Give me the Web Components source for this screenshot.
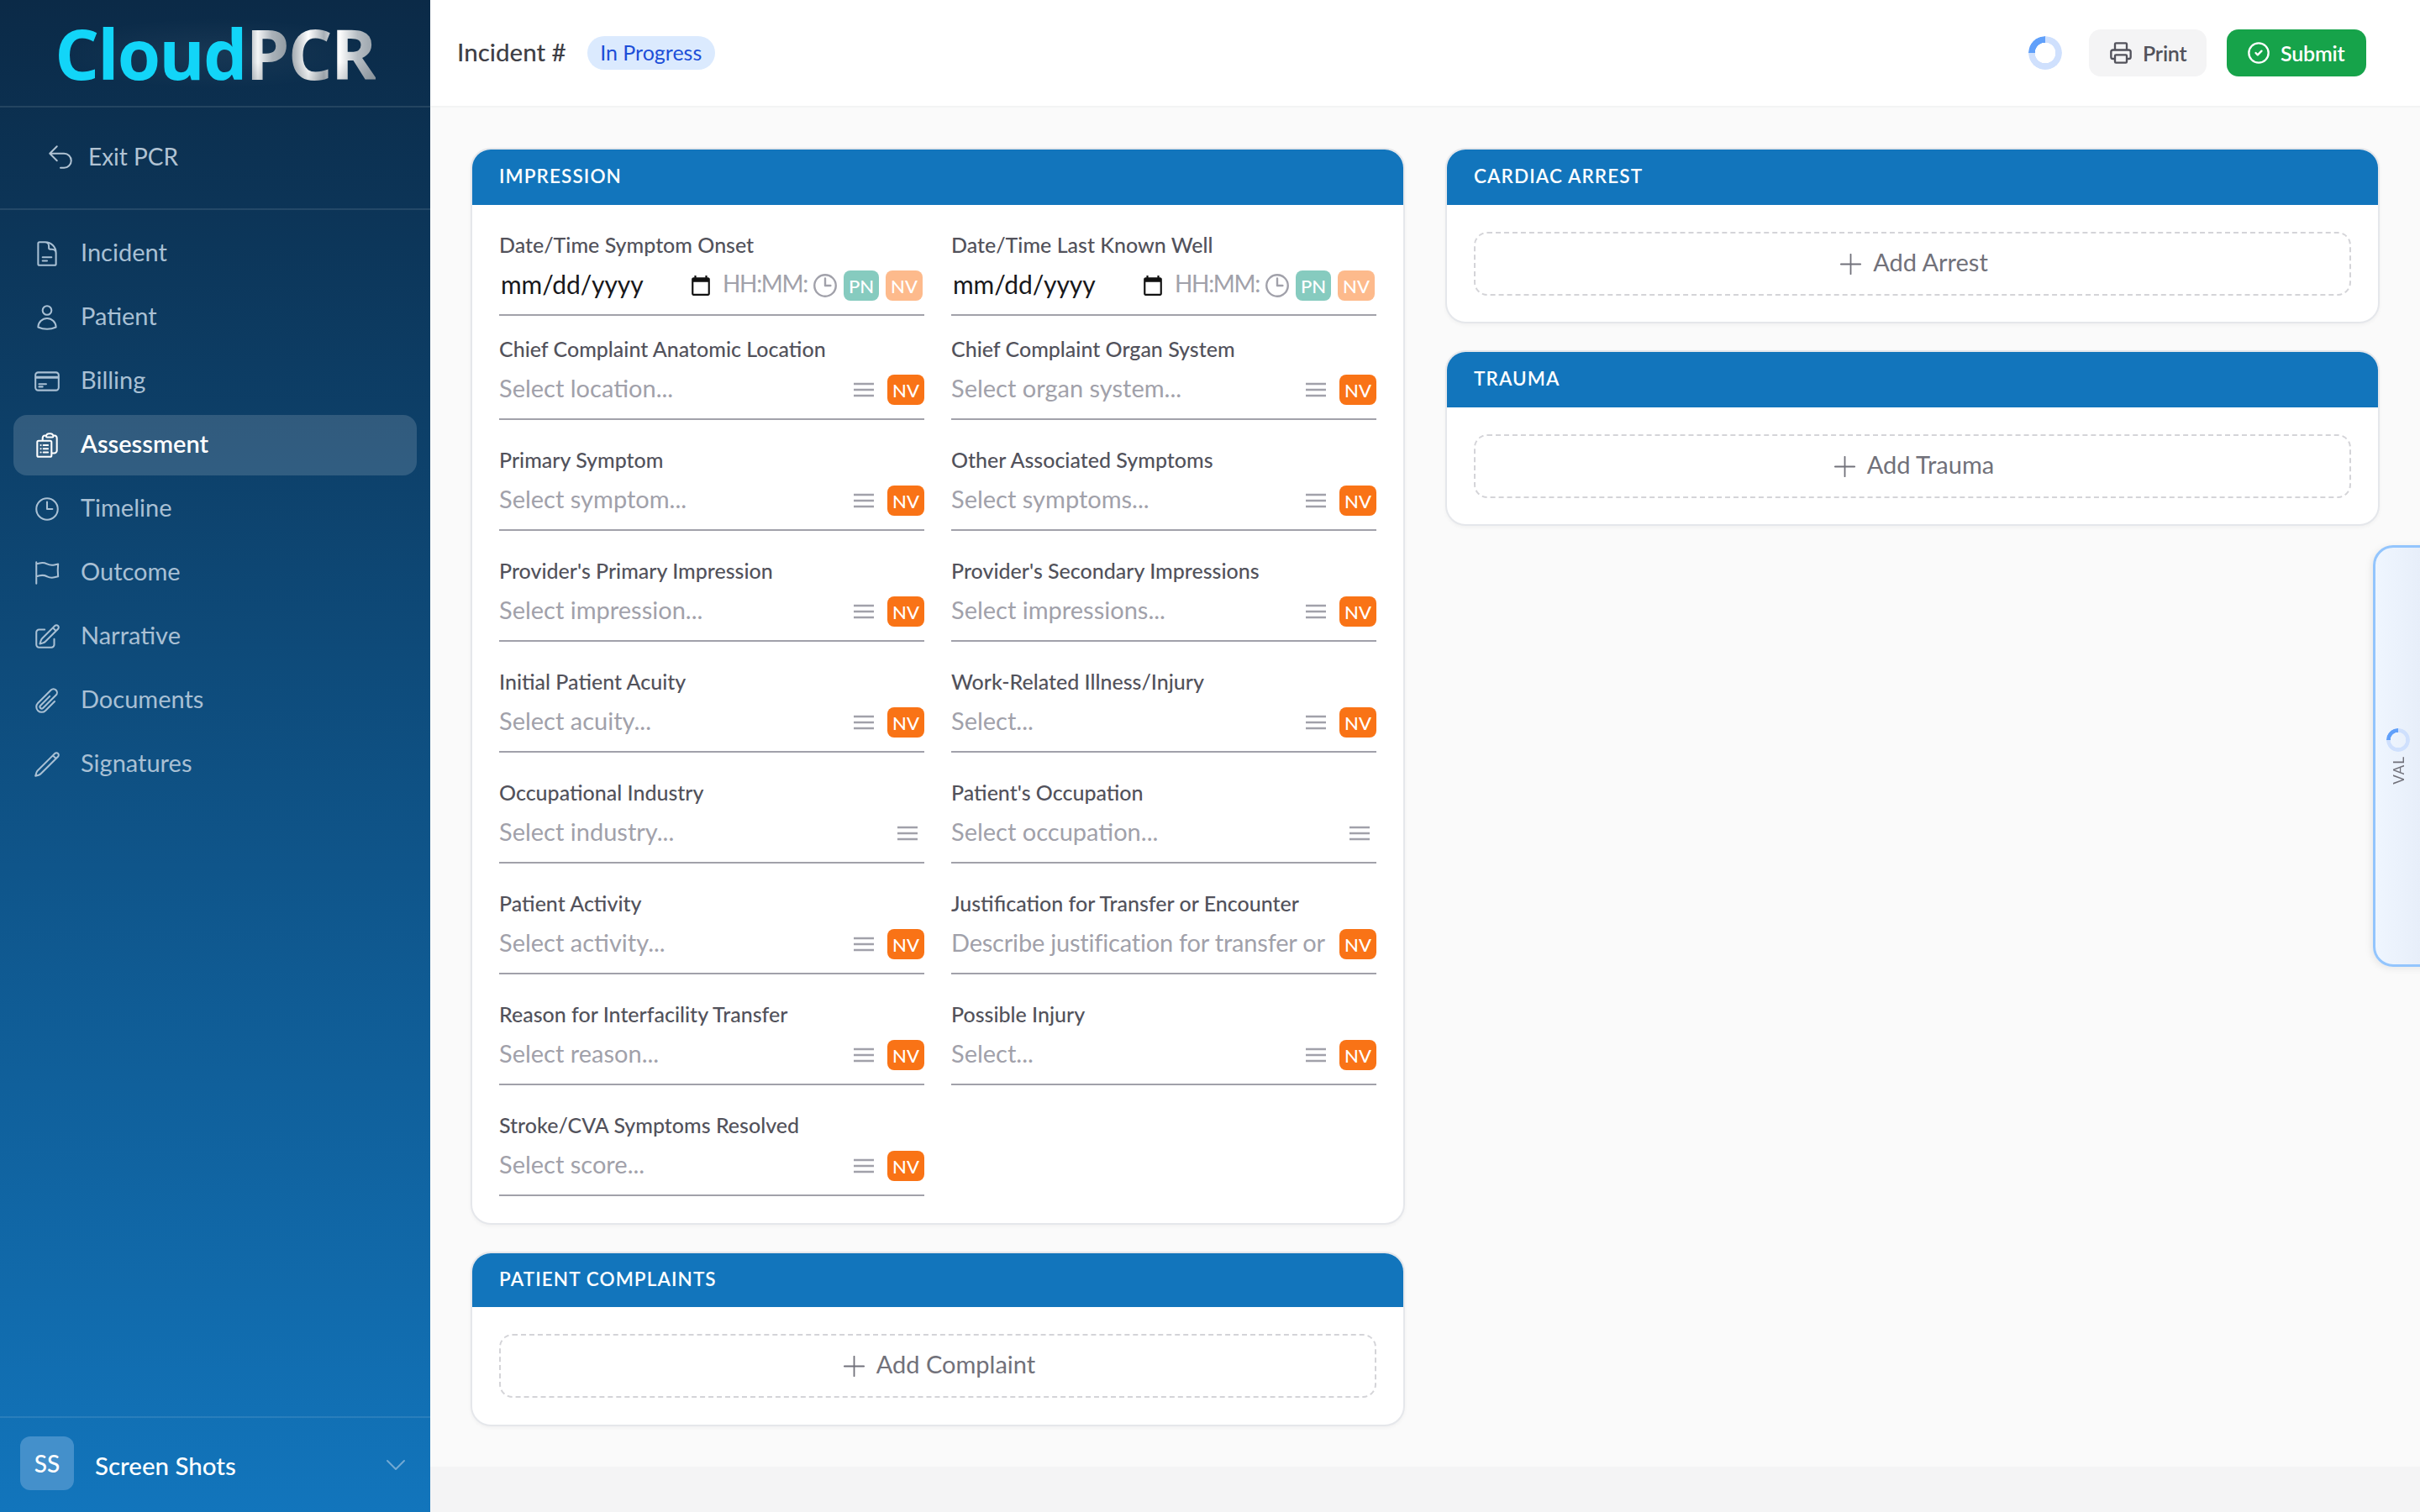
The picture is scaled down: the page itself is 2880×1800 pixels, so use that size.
<!DOCTYPE html>
<html lang="en">
<head>
<meta charset="utf-8">
<title>CloudPCR</title>
<style>
html,body{margin:0;padding:0;height:100%;background:#f4f4f5;font-family:"Lato","Liberation Sans",sans-serif;}
body{display:block;}
</style>
</head>
<body>
<cp-app>
  <cp-sidebar slot="sidebar">
    <cp-nav-item icon="doc">Incident</cp-nav-item>
    <cp-nav-item icon="user">Patient</cp-nav-item>
    <cp-nav-item icon="card">Billing</cp-nav-item>
    <cp-nav-item icon="clip" active>Assessment</cp-nav-item>
    <cp-nav-item icon="clock">Timeline</cp-nav-item>
    <cp-nav-item icon="flag">Outcome</cp-nav-item>
    <cp-nav-item icon="edit">Narrative</cp-nav-item>
    <cp-nav-item icon="paperclip">Documents</cp-nav-item>
    <cp-nav-item icon="pencil">Signatures</cp-nav-item>
  </cp-sidebar>
  <cp-topbar slot="topbar"></cp-topbar>
  <cp-column>
    <cp-card title="Impression" h="66" pad="30px 32px 32px">
      <cp-form-grid>
        <cp-field label="Date/Time Symptom Onset" kind="date" tight></cp-field>
        <cp-field label="Date/Time Last Known Well" kind="date" tight></cp-field>
        <cp-field label="Chief Complaint Anatomic Location" placeholder="Select location..." nv></cp-field>
        <cp-field label="Chief Complaint Organ System" placeholder="Select organ system..." nv></cp-field>
        <cp-field label="Primary Symptom" placeholder="Select symptom..." nv></cp-field>
        <cp-field label="Other Associated Symptoms" placeholder="Select symptoms..." nv></cp-field>
        <cp-field label="Provider's Primary Impression" placeholder="Select impression..." nv></cp-field>
        <cp-field label="Provider's Secondary Impressions" placeholder="Select impressions..." nv></cp-field>
        <cp-field label="Initial Patient Acuity" placeholder="Select acuity..." nv></cp-field>
        <cp-field label="Work-Related Illness/Injury" placeholder="Select..." nv></cp-field>
        <cp-field label="Occupational Industry" placeholder="Select industry..."></cp-field>
        <cp-field label="Patient's Occupation" placeholder="Select occupation..."></cp-field>
        <cp-field label="Patient Activity" placeholder="Select activity..." nv></cp-field>
        <cp-field label="Justification for Transfer or Encounter" placeholder="Describe justification for transfer or" kind="text" nv></cp-field>
        <cp-field label="Reason for Interfacility Transfer" placeholder="Select reason..." nv></cp-field>
        <cp-field label="Possible Injury" placeholder="Select..." nv></cp-field>
        <cp-field label="Stroke/CVA Symptoms Resolved" placeholder="Select score..." nv last></cp-field>
      </cp-form-grid>
    </cp-card>
    <cp-card title="Patient Complaints" h="64" pad="32px"><cp-add-button>Add Complaint</cp-add-button></cp-card>
  </cp-column>
  <cp-column>
    <cp-card title="Cardiac Arrest" h="66" pad="32px 32px 31px"><cp-add-button>Add Arrest</cp-add-button></cp-card>
    <cp-card title="Trauma" h="66" pad="32px 32px 31px"><cp-add-button>Add Trauma</cp-add-button></cp-card>
  </cp-column>
  <cp-val-tab slot="overlay"></cp-val-tab>
</cp-app>

<script>
const ICONS = {
  exit:'M9 15 3 9m0 0 6-6M3 9h12a6 6 0 0 1 0 12h-3',
  doc:'M19.5 14.25v-2.625a3.375 3.375 0 0 0-3.375-3.375h-1.5A1.125 1.125 0 0 1 13.5 7.125v-1.5a3.375 3.375 0 0 0-3.375-3.375H8.25m0 12.75h7.5m-7.5 3H12M10.5 2.25H5.625c-.621 0-1.125.504-1.125 1.125v17.25c0 .621.504 1.125 1.125 1.125h12.75c.621 0 1.125-.504 1.125-1.125V11.25a9 9 0 0 0-9-9Z',
  user:'M15.75 6a3.75 3.75 0 1 1-7.5 0 3.75 3.75 0 0 1 7.5 0ZM4.501 20.118a7.5 7.5 0 0 1 14.998 0A17.933 17.933 0 0 1 12 21.75c-2.676 0-5.216-.584-7.499-1.632Z',
  card:'M2.25 8.25h19.5M2.25 9h19.5m-16.5 5.25h6m-6 2.25h3m-3.75 3h15a2.25 2.25 0 0 0 2.25-2.25V6.75A2.25 2.25 0 0 0 19.5 4.5h-15a2.25 2.25 0 0 0-2.25 2.25v10.5A2.25 2.25 0 0 0 4.5 19.5Z',
  clip:'M9 12h3.75M9 15h3.75M9 18h3.75m3 .75H18a2.25 2.25 0 0 0 2.25-2.25V6.108c0-1.135-.845-2.098-1.976-2.192a48.424 48.424 0 0 0-1.123-.08m-5.801 0c-.065.21-.1.433-.1.664 0 .414.336.75.75.75h4.5a.75.75 0 0 0 .75-.75 2.25 2.25 0 0 0-.1-.664m-5.8 0A2.251 2.251 0 0 1 13.5 2.25H15c1.012 0 1.867.668 2.15 1.586m-5.8 0c-.376.023-.75.05-1.124.08C9.095 4.01 8.25 4.973 8.25 6.108V8.25m0 0H4.875c-.621 0-1.125.504-1.125 1.125v11.25c0 .621.504 1.125 1.125 1.125h9.75c.621 0 1.125-.504 1.125-1.125V9.375c0-.621-.504-1.125-1.125-1.125H8.25ZM6.75 12h.008v.008H6.75V12Zm0 3h.008v.008H6.75V15Zm0 3h.008v.008H6.75V18Z',
  clock:'M12 6v6h4.5m4.5 0a9 9 0 1 1-18 0 9 9 0 0 1 18 0Z',
  flag:'M3 3v1.5M3 21v-6m0 0 2.77-.693a9 9 0 0 1 6.208.682l.108.054a9 9 0 0 0 6.086.71l3.114-.732a48.524 48.524 0 0 1-.005-10.499l-3.11.732a9 9 0 0 1-6.085-.711l-.108-.054a9 9 0 0 0-6.208-.682L3 4.5M3 15V4.5',
  edit:'m16.862 4.487 1.687-1.688a1.875 1.875 0 1 1 2.652 2.652L10.582 16.07a4.5 4.5 0 0 1-1.897 1.13L6 18l.8-2.685a4.5 4.5 0 0 1 1.13-1.897l8.932-8.931Zm0 0L19.5 7.125M18 14v4.75A2.25 2.25 0 0 1 15.75 21H5.25A2.25 2.25 0 0 1 3 18.75V8.25A2.25 2.25 0 0 1 5.25 6H10',
  paperclip:'m18.375 12.739-7.693 7.693a4.5 4.5 0 0 1-6.364-6.364l10.94-10.94A3 3 0 1 1 19.5 7.372L8.552 18.32m.009-.01-.01.01m5.699-9.941-7.81 7.81a1.5 1.5 0 0 0 2.112 2.13',
  pencil:'m16.862 4.487 1.687-1.688a1.875 1.875 0 1 1 2.652 2.652L6.832 19.82a4.5 4.5 0 0 1-1.897 1.13l-2.685.8.8-2.685a4.5 4.5 0 0 1 1.13-1.897L16.863 4.487Zm0 0L19.5 7.125',
  chevron:'m19.5 8.25-7.5 7.5-7.5-7.5',
  printer:'M6 18H4a2 2 0 0 1-2-2v-5a2 2 0 0 1 2-2h16a2 2 0 0 1 2 2v5a2 2 0 0 1-2 2h-2M6 9V3a1 1 0 0 1 1-1h10a1 1 0 0 1 1 1v6M7 14h10a1 1 0 0 1 1 1v6a1 1 0 0 1-1 1H7a1 1 0 0 1-1-1v-6a1 1 0 0 1 1-1Z',
  check:'M22 12a10 10 0 1 1-20 0 10 10 0 0 1 20 0ZM9 12l2 2 4-4',
  plus:'M12 4.5v15m7.5-7.5h-15'
};

class CpIcon extends HTMLElement {
  connectedCallback(){
    const s = this.getAttribute('size')||34, w = this.getAttribute('sw')||1.5, n = this.getAttribute('name');
    const vb = this.getAttribute('vb')||'0 0 24 24';
    this.attachShadow({mode:'open'}).innerHTML =
      `<style>:host{display:inline-flex;flex:none;line-height:0}</style>
       <svg xmlns="http://www.w3.org/2000/svg" width="${s}" height="${s}" viewBox="${vb}" fill="none" stroke="currentColor" stroke-width="${w}" stroke-linecap="round" stroke-linejoin="round"><path d="${ICONS[n]}"/></svg>`;
  }
}
customElements.define('cp-icon', CpIcon);

class CpSpinner extends HTMLElement {
  connectedCallback(){
    const s = +(this.getAttribute('size')||40), t = +(this.getAttribute('thick')||8);
    this.attachShadow({mode:'open'}).innerHTML =
      `<style>:host{display:inline-block;flex:none;line-height:0}
       .r{width:${s}px;height:${s}px;border-radius:50%;box-sizing:border-box;background:conic-gradient(#cfe0fd 0 270deg,#60a0fa 270deg 360deg);
       -webkit-mask:radial-gradient(farthest-side,transparent calc(100% - ${t}px),#000 calc(100% - ${t}px + .5px));mask:radial-gradient(farthest-side,transparent calc(100% - ${t}px),#000 calc(100% - ${t}px + .5px));}</style>
       <div class="r"></div>`;
  }
}
customElements.define('cp-spinner', CpSpinner);

class CpApp extends HTMLElement {
  connectedCallback(){
    this.attachShadow({mode:'open'}).innerHTML = `<style>
      :host{display:grid;grid-template-columns:512px 1fr;height:1800px;width:2880px;position:relative;overflow:hidden;font-family:"Lato","Liberation Sans",sans-serif;}
      .main{display:flex;flex-direction:column;min-width:0;background:#f4f4f5;}
      .content{display:grid;grid-template-columns:1fr 1fr;gap:48px;padding:48px;background:#fafafa;align-items:start;}
    </style>
    <slot name="sidebar"></slot>
    <div class="main"><slot name="topbar"></slot><div class="content"><slot></slot></div></div>
    <slot name="overlay"></slot>`;
  }
}
customElements.define('cp-app', CpApp);

class CpSidebar extends HTMLElement {
  connectedCallback(){
    this.attachShadow({mode:'open'}).innerHTML = `<style>
      :host{display:flex;flex-direction:column;height:1800px;background:linear-gradient(180deg,#0b2a47 0%,#1275bc 100%);color:#fff;}
      .logo{height:126px;border-bottom:2px solid rgba(255,255,255,.1);display:flex;align-items:center;justify-content:center;flex:none;box-sizing:content-box;}
      .logotext{font-family:"Open Sans","Liberation Sans",sans-serif;font-weight:700;font-size:83px;line-height:1;letter-spacing:-1.9px;white-space:nowrap;
        background:radial-gradient(ellipse at center,rgba(255,255,255,.05),rgba(255,255,255,0) 70%);padding:0 4px 2px;}
      .cloud{color:#12d5f8;}
      .pcr{background:linear-gradient(180deg,#fff0,#0000 60%,rgba(60,70,80,.35)),linear-gradient(90deg,#9aa3ab 0%,#f4f6f7 9%,#aab2b9 20%,#8f98a0 33%,#fff 48%,#a7afb6 60%,#fff 72%,#b5bcc2 86%,#98a1a9 100%);-webkit-background-clip:text;background-clip:text;color:transparent;}
      .exit{height:120px;flex:none;box-sizing:content-box;border-bottom:2px solid rgba(255,255,255,.1);display:flex;align-items:center;gap:16px;padding-left:55px;color:#b1c3d3;font-size:28px;}
      .exit span{position:relative;top:-2px}
      .exit cp-icon{position:relative;top:-1px}
      nav{flex:1;display:flex;flex-direction:column;gap:4px;padding:16px;}
      .foot{flex:none;height:112px;border-top:2px solid rgba(255,255,255,.1);display:flex;align-items:center;padding:0 24px;gap:25px;}
      .av{width:64px;height:64px;border-radius:12px;background:#4490cb;display:flex;align-items:center;justify-content:center;font-size:28px;font-weight:500;margin-top:-4px;}
      .name{flex:1;font-size:29.5px;font-weight:500;}
      .chev{color:#72a9d3;margin-right:1px;}
    </style>
    <div class="logo"><div class="logotext"><span class="cloud">Cloud</span><span class="pcr">PCR</span></div></div>
    <div class="exit"><cp-icon name="exit" size="34" sw="1.4"></cp-icon><span>Exit PCR</span></div>
    <nav><slot></slot></nav>
    <div class="foot"><div class="av">SS</div><div class="name">Screen Shots</div><cp-icon class="chev" name="chevron" size="32" sw="1.5"></cp-icon></div>`;
  }
}
customElements.define('cp-sidebar', CpSidebar);

class CpNavItem extends HTMLElement {
  connectedCallback(){
    const active = this.hasAttribute('active');
    this.attachShadow({mode:'open'}).innerHTML = `<style>
      :host{display:flex;align-items:center;height:72px;border-radius:16px;padding-left:23px;gap:23px;font-size:29px;color:${active?'#fff':'#a9c0d4'};background:${active?'rgba(255,255,255,.15)':'transparent'};font-weight:${active?600:400};}
      span{position:relative;top:-3px}
    </style>
    <cp-icon name="${this.getAttribute('icon')}" size="34" sw="1.45"></cp-icon><span><slot></slot></span>`;
  }
}
customElements.define('cp-nav-item', CpNavItem);

class CpTopbar extends HTMLElement {
  connectedCallback(){
    this.attachShadow({mode:'open'}).innerHTML = `<style>
      :host{display:flex;align-items:center;height:126px;box-sizing:content-box;background:#fff;border-bottom:2px solid #f3f4f4;padding:0 64px 0 32px;}
      .title{font-size:29.5px;font-weight:500;color:#3f3f46;margin-bottom:3px;}
      .badge{margin-left:25px;height:40px;width:152px;justify-content:center;border-radius:20px;background:#dbeafe;color:#1d4ed8;font-size:25px;display:flex;align-items:center;padding-bottom:2px;box-sizing:border-box;margin-top:-1px;}
      .sp{flex:1}
      .btn{height:56px;box-sizing:border-box;border-radius:14px;display:flex;align-items:center;gap:12px;font-size:25px;font-weight:600;padding:0 0 0 24px;letter-spacing:-.2px;}
      .print{background:#f4f4f5;color:#52525b;margin-left:32px;width:140px;}
      .submit{background:#16a34a;color:#fff;margin-left:24px;width:166px;}
    </style>
    <span class="title">Incident #</span><span class="badge">In Progress</span><span class="sp"></span>
    <cp-spinner size="40" thick="8"></cp-spinner>
    <div class="btn print"><cp-icon name="printer" size="28" sw="2"></cp-icon><span>Print</span></div>
    <div class="btn submit"><cp-icon name="check" size="28" sw="2"></cp-icon><span>Submit</span></div>`;
  }
}
customElements.define('cp-topbar', CpTopbar);

class CpColumn extends HTMLElement {
  connectedCallback(){
    this.attachShadow({mode:'open'}).innerHTML = `<style>:host{display:flex;flex-direction:column;gap:32px;min-width:0;}</style><slot></slot>`;
  }
}
customElements.define('cp-column', CpColumn);

class CpCard extends HTMLElement {
  connectedCallback(){
    const pad = this.getAttribute('pad')||'32px';
    const h = this.getAttribute('h')||66;
    this.attachShadow({mode:'open'}).innerHTML = `<style>
      :host{display:block;background:#fff;border:2px solid #e5e7eb;border-radius:24px;box-shadow:0 2px 4px rgba(0,0,0,.04);overflow:hidden;}
      .h{height:${h}px;box-sizing:border-box;background:#1275bc;color:#fff;display:flex;align-items:center;padding:0 32px 4px;font-size:22.5px;font-weight:600;letter-spacing:1.1px;text-transform:uppercase;}
      .b{padding:${pad};}
    </style>
    <div class="h">${this.getAttribute('title')}</div><div class="b"><slot></slot></div>`;
  }
}
customElements.define('cp-card', CpCard);

class CpFormGrid extends HTMLElement {
  connectedCallback(){
    this.attachShadow({mode:'open'}).innerHTML = `<style>:host{display:grid;grid-template-columns:1fr 1fr;column-gap:32px;}</style><slot></slot>`;
  }
}
customElements.define('cp-form-grid', CpFormGrid);

class CpBadge extends HTMLElement {
  connectedCallback(){
    this.attachShadow({mode:'open'}).innerHTML = `<style>
      :host{display:inline-flex;align-items:center;justify-content:center;flex:none;height:36px;width:${this.getAttribute('w')||44}px;border-radius:8px;background:${this.getAttribute('bg')||'#f97316'};color:#fff;font-size:22px;font-weight:500;}
    </style><slot></slot>`;
  }
}
customElements.define('cp-badge', CpBadge);

class CpField extends HTMLElement {
  connectedCallback(){
    const kind = this.getAttribute('kind')||'select', nv = this.hasAttribute('nv');
    const tight = this.hasAttribute('tight'), last = this.hasAttribute('last');
    const ph = this.getAttribute('placeholder')||'';
    let ctl = '';
    if(kind==='date'){
      ctl = `<span class="date">mm/dd/yyyy</span>
        <svg class="cal" width="26" height="26" viewBox="0 0 24 24" fill="#111"><path d="M20 3h-1V1h-2v2H7V1H5v2H4c-1.1 0-2 .9-2 2v16c0 1.1.9 2 2 2h16c1.1 0 2-.9 2-2V5c0-1.1-.9-2-2-2zm0 18H4V8h16v13z"/></svg>
        <span class="time">HH:MM:</span>
        <cp-icon class="tclock" name="clock" size="34" sw="1.7"></cp-icon>
        <cp-badge bg="#86cbbf" w="42" class="pn">PN</cp-badge><cp-badge bg="#fdba8c" class="nv2">NV</cp-badge>`;
    } else if(kind==='text'){
      ctl = `<span class="ph" style="letter-spacing:-.2px">${ph}</span><cp-badge>NV</cp-badge>`;
    } else {
      ctl = `<span class="ph">${ph}</span>
        <svg class="menu${nv?'':' solo'}" width="24" height="18" viewBox="0 0 24 18" stroke="#a1a1aa" stroke-width="2.5" fill="none"><path d="M0 2h24M0 9h24M0 16h24"/></svg>
        ${nv?'<cp-badge>NV</cp-badge>':''}`;
    }
    this.attachShadow({mode:'open'}).innerHTML = `<style>
      :host{display:block;margin-bottom:${last?0:tight?22:30}px;min-width:0;}
      label{display:block;height:36px;line-height:34px;font-size:25px;color:#52525b;font-weight:500;white-space:nowrap;}
      .c{height:66px;box-sizing:border-box;border-bottom:2px solid #a1a1aa;display:flex;align-items:center;padding-bottom:4px;gap:16px;overflow:hidden;}
      .ph{flex:1;min-width:0;font-size:29px;color:#a1a1aa;white-space:nowrap;margin-bottom:5px;}
      .menu.solo{margin-right:8px;}
      .date{font-size:30px;color:#18181b;margin-left:2px;margin-bottom:4px;width:227px;flex:none;letter-spacing:-.1px;}
      .cal{margin-left:-2px;margin-right:-2px;flex:none;}
      .c.d{gap:0;}
      .time{width:100px;flex:none;font-size:28px;color:#a1a1aa;margin-left:15px;margin-bottom:6px;letter-spacing:-1.3px;white-space:nowrap;}
      .tclock{color:#a1a1aa;margin-left:5px;}
      .pn{margin-left:5px;} .nv2{margin-left:8px;}
    </style>
    <label>${this.getAttribute('label')}</label><div class="c${kind==='date'?' d':''}">${ctl}</div>`;
  }
}
customElements.define('cp-field', CpField);

class CpAddButton extends HTMLElement {
  connectedCallback(){
    this.attachShadow({mode:'open'}).innerHTML = `<style>
      :host{display:flex;align-items:center;justify-content:center;gap:14px;height:76px;box-sizing:border-box;border:2px dashed #d4d4d8;border-radius:16px;color:#71717a;font-size:29px;padding-left:4px;}
      span{position:relative;top:-3px}
    </style><cp-icon name="plus" size="25" vb="4 4 16 16" sw="1.15"></cp-icon><span><slot></slot></span>`;
  }
}
customElements.define('cp-add-button', CpAddButton);

class CpValTab extends HTMLElement {
  connectedCallback(){
    this.attachShadow({mode:'open'}).innerHTML = `<style>
      :host{position:absolute;left:2824px;top:649px;width:80px;height:502px;box-sizing:border-box;border:3px solid #93c5fd;border-radius:24px 0 0 24px;background:linear-gradient(90deg,#eff6ff,#e4ebf7);box-shadow:-2px 2px 8px rgba(0,0,0,.08);display:flex;flex-direction:column;align-items:flex-start;justify-content:center;padding-left:13px;gap:5px;}
      .v{writing-mode:vertical-rl;transform:rotate(180deg);font-size:17px;color:#71717a;letter-spacing:1px;margin-left:7px;line-height:16px;}
    </style><cp-spinner size="28" thick="5"></cp-spinner><span class="v">VAL</span>`;
  }
}
customElements.define('cp-val-tab', CpValTab);
</script>
</body>
</html>
